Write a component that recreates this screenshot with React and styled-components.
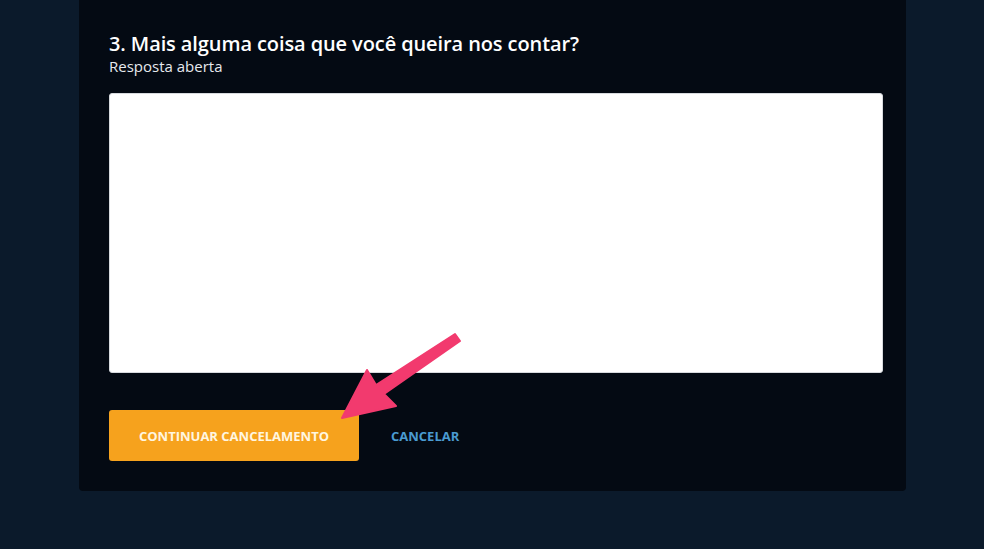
import React from "react";
import styled, { createGlobalStyle } from "styled-components";

const GlobalStyle = createGlobalStyle`
  html, body {
    margin: 0;
    padding: 0;
    background: #0b1a2b;
  }
  body {
    font-family: "Open Sans", "Noto Sans", sans-serif;
  }
`;

const Page = styled.div`
  position: relative;
  width: 984px;
  height: 549px;
  overflow: hidden;
  background: #0b1a2b;
`;

const Card = styled.div`
  margin: 0 0 0 79px;
  width: 827px;
  height: 491px;
  box-sizing: border-box;
  padding: 31px 23px 0 30px;
  background: #040a13;
  border-radius: 0 0 4px 4px;
`;

const Title = styled.h2`
  margin: 0;
  color: #ffffff;
  font-size: 20px;
  font-weight: 600;
  line-height: 26px;
  letter-spacing: -0.1px;
`;

const Subtitle = styled.div`
  color: #e6e9ee;
  font-size: 15px;
  line-height: 18px;
  margin-bottom: 18px;
`;

const Answer = styled.textarea`
  display: block;
  width: 774px;
  height: 280px;
  margin: 0;
  box-sizing: border-box;
  border: 1px solid #d7dade;
  border-radius: 3px;
  background: #ffffff;
  resize: none;
  outline: none;
`;

const Actions = styled.div`
  display: flex;
  align-items: center;
  gap: 32px;
  margin-top: 37px;
`;

const Button = styled.button`
  height: 51px;
  border: none;
  border-radius: 3px;
  background: ${(props) => (props.primary ? "#f6a21d" : "transparent")};
  color: ${(props) => (props.primary ? "#fff6e0" : "#4a9bd1")};
  font-family: "Open Sans", "Noto Sans", sans-serif;
  font-size: 13px;
  font-weight: 700;
  letter-spacing: 0;
  padding: 0;
  width: ${(props) => (props.primary ? "250px" : "auto")};
  cursor: pointer;
`;

const Arrow = styled.svg`
  position: absolute;
  left: 0;
  top: 0;
  pointer-events: none;
`;

export default function App() {
  return (
    <Page>
      <GlobalStyle />
      <Card>
        <Title>3. Mais alguma coisa que você queira nos contar?</Title>
        <Subtitle>Resposta aberta</Subtitle>
        <Answer />
        <Actions>
          <Button primary>CONTINUAR CANCELAMENTO</Button>
          <Button>CANCELAR</Button>
        </Actions>
      </Card>
      <Arrow width="984" height="549" viewBox="0 0 984 549">
        <polygon
          points="342,418 367,370 376,385 455,334 460,341 384,394 396,406"
          fill="#f23a6e"
          stroke="#f23a6e"
          strokeWidth="2"
          strokeLinejoin="round"
        />
      </Arrow>
    </Page>
  );
}
